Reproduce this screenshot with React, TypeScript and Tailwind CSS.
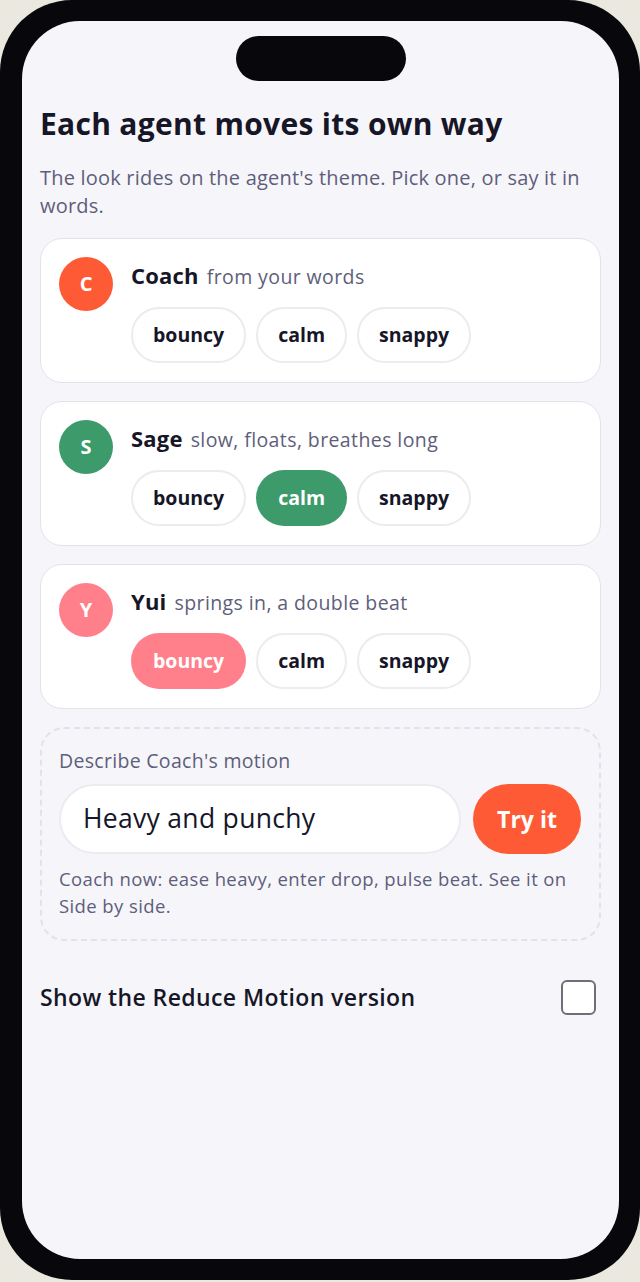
import React, { useState } from 'react';

type Agent = {
  name: string;
  initial: string;
  note: string;
  color: string;
  selected: string | null;
};

const agents: Agent[] = [
  { name: 'Coach', initial: 'C', note: 'from your words', color: 'bg-[#ff5a36]', selected: null },
  { name: 'Sage', initial: 'S', note: 'slow, floats, breathes long', color: 'bg-[#3d9a6a]', selected: 'calm' },
  { name: 'Yui', initial: 'Y', note: 'springs in, a double beat', color: 'bg-[#ff7f8a]', selected: 'bouncy' },
];

const styles = ['bouncy', 'calm', 'snappy'];

function AgentCard({ agent }: { agent: Agent }) {
  return (
    <div className="flex gap-[18px] rounded-[22px] border border-[#e2e2ea] bg-white px-[18px] pt-[18px] pb-[19px]">
      <div
        className={`flex h-[54px] w-[54px] shrink-0 items-center justify-center rounded-full text-[20px] font-bold text-white ${agent.color}`}
      >
        {agent.initial}
      </div>
      <div className="flex flex-col">
        <div className="flex items-baseline gap-[8px] leading-[36px]">
          <span className="text-[22px] font-bold tracking-[0.2px] text-[#161628]">{agent.name}</span>
          <span className="text-[19.5px] tracking-[0.4px] text-[#5e5e7a]">{agent.note}</span>
        </div>
        <div className="mt-[12px] flex gap-[10px]">
          {styles.map((s) => {
            const on = agent.selected === s;
            return (
              <button
                key={s}
                className={
                  on
                    ? `h-[56px] rounded-full px-[22px] text-[19.5px] font-bold text-white ${agent.color}`
                    : 'h-[56px] rounded-full border-2 border-[#ebebf0] bg-white px-[20px] text-[19.5px] font-bold text-[#161628]'
                }
              >
                {s}
              </button>
            );
          })}
        </div>
      </div>
    </div>
  );
}

export default function App() {
  const [reduce, setReduce] = useState(false);

  return (
    <div
      className="min-h-[1282px] bg-[#ebe8df]"
      style={{ fontFamily: '"Open Sans", Lato, sans-serif' }}
    >
      <div className="h-[1280px] rounded-[72px] bg-[#07070c] p-[21px] pl-[22px]">
        <div className="flex h-full flex-col rounded-[58px] bg-[#f6f6fa] px-[18px]">
          <div className="flex justify-center pt-[15px]">
            <div className="h-[45px] w-[170px] rounded-full bg-[#07070c]" />
          </div>

          <h1 className="mt-[23px] text-[30px] font-bold leading-[40px] tracking-[0.3px] text-[#161628]">
            Each agent moves its own way
          </h1>
          <p className="mt-[20px] text-[20px] leading-[28px] tracking-[0.2px] text-[#5e5e7a]">
            The look rides on the agent's theme. Pick one, or say it in words.
          </p>

          <div className="mt-[18px] flex flex-col gap-[18px]">
            {agents.map((a) => (
              <AgentCard key={a.name} agent={a} />
            ))}
          </div>

          <div className="mt-[18px] rounded-[24px] border-2 border-dashed border-[#e2e2ea] px-[17px] pt-[18px] pb-[20px]">
            <div className="text-[19.5px] leading-[28px] tracking-[0.3px] text-[#5e5e7a]">Describe Coach's motion</div>
            <div className="mt-[9px] flex gap-[12px]">
              <div className="flex h-[70px] flex-1 items-center rounded-full border-2 border-[#ebebf0] bg-white px-[22px] text-[26.5px] tracking-[0.3px] text-[#161628]">
                Heavy and punchy
              </div>
              <button className="mr-[1px] h-[70px] w-[108px] rounded-full bg-[#ff5a36] text-[23px] font-bold text-white">
                Try it
              </button>
            </div>
            <p className="mt-[11px] text-[18.5px] leading-[27px] tracking-[0.4px] text-[#5e5e7a]">
              Coach now: ease heavy, enter drop, pulse beat. See it on Side by side.
            </p>
          </div>

          <div className="mt-[39px] flex items-center justify-between">
            <span className="text-[23px] font-semibold tracking-[0.4px] text-[#161628]">
              Show the Reduce Motion version
            </span>
            <button
              onClick={() => setReduce(!reduce)}
              className="mr-[5px] h-[35px] w-[35px] rounded-[6px] border-2 border-[#6f6f78] bg-white"
              aria-pressed={reduce}
            />
          </div>
        </div>
      </div>
    </div>
  );
}
